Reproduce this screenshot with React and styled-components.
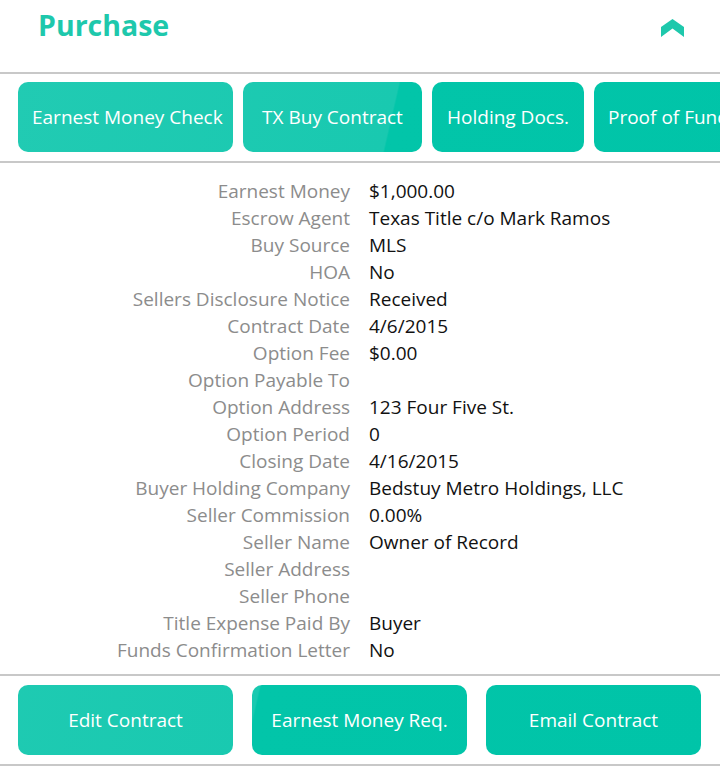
import React from "react"
import styled, { createGlobalStyle } from "styled-components"

const GlobalStyle = createGlobalStyle`
  html, body {
    margin: 0;
    padding: 0;
    background: #ffffff;
  }
  body {
    font-family: "Open Sans", "DejaVu Sans", sans-serif;
  }
`

const Page = styled.div`
  width: 720px;
  overflow: hidden;
`

const Header = styled.div`
  display: flex;
  align-items: flex-start;
  justify-content: space-between;
  height: 74px;
  padding: 4px 36px 0 38px;
  box-sizing: border-box;
  border-bottom: 2px solid #c8c8c8;
`

const Title = styled.h1`
  margin: 0;
  font-size: 28.5px;
  line-height: 42px;
  font-weight: 700;
  color: #1ec8ac;
`

const Chevron = styled.svg`
  margin-top: 15px;
  display: block;
`

const ButtonStrip = styled.div`
  display: flex;
  gap: ${(p) => p.$gap}px;
  padding: ${(p) => p.$top}px 18px 9px;
  overflow: hidden;
  border-bottom: 2px solid #c8c8c8;
`

/* the gloss is one diagonal across the screen, so the gradient is fixed to the viewport */
const ActionButton = styled.button`
  flex: none;
  width: ${(p) => p.$w}px;
  height: 70px;
  border: none;
  border-radius: 10px;
  background: linear-gradient(103deg, #22cbb3 0%, #19c9b0 46.5%, #02c5a9 46.7%, #00c4a8 100%) fixed;
  color: #ffffff;
  font-family: inherit;
  font-size: 19px;
  white-space: nowrap;
  padding: 0 14px;
  text-align: ${(p) => (p.$left ? "left" : "center")};
  cursor: pointer;
`

const Details = styled.dl`
  display: grid;
  grid-template-columns: 350px 1fr;
  column-gap: 19px;
  margin: 0;
  padding: 15px 0 10px;
  border-bottom: 2px solid #c8c8c8;
  font-size: 19px;
  line-height: 27px;
`

const Label = styled.dt`
  text-align: right;
  color: #8c8c8c;
  white-space: nowrap;
`

const Value = styled.dd`
  margin: 0;
  color: #111111;
  white-space: nowrap;
  min-height: 27px;
`

const rows = [
  ["Earnest Money", "$1,000.00"],
  ["Escrow Agent", "Texas Title c/o Mark Ramos"],
  ["Buy Source", "MLS"],
  ["HOA", "No"],
  ["Sellers Disclosure Notice", "Received"],
  ["Contract Date", "4/6/2015"],
  ["Option Fee", "$0.00"],
  ["Option Payable To", ""],
  ["Option Address", "123 Four Five St."],
  ["Option Period", "0"],
  ["Closing Date", "4/16/2015"],
  ["Buyer Holding Company", "Bedstuy Metro Holdings, LLC"],
  ["Seller Commission", "0.00%"],
  ["Seller Name", "Owner of Record"],
  ["Seller Address", ""],
  ["Seller Phone", ""],
  ["Title Expense Paid By", "Buyer"],
  ["Funds Confirmation Letter", "No"],
]

const docs = [
  ["Earnest Money Check", 215],
  ["TX Buy Contract", 179],
  ["Holding Docs.", 152],
  ["Proof of Funds", 180],
]

const actions = ["Edit Contract", "Earnest Money Req.", "Email Contract"]

export default function App() {
  return (
    <Page>
      <GlobalStyle />
      <Header>
        <Title>Purchase</Title>
        <Chevron width="23" height="18" viewBox="0 0 23 18">
          <polygon points="11.5,0 23,8 23,18 11.5,9.5 0,18 0,8" fill="#1ec8ac" />
        </Chevron>
      </Header>
      <ButtonStrip $gap={10} $top={8}>
        {docs.map(([name, w], i) => (
          <ActionButton key={name} $w={w} $left={i === docs.length - 1}>
            {name}
          </ActionButton>
        ))}
      </ButtonStrip>
      <Details>
        {rows.map(([label, value]) => (
          <React.Fragment key={label}>
            <Label>{label}</Label>
            <Value>{value}</Value>
          </React.Fragment>
        ))}
      </Details>
      <ButtonStrip $gap={19} $top={9}>
        {actions.map((name) => (
          <ActionButton key={name} $w={215}>
            {name}
          </ActionButton>
        ))}
      </ButtonStrip>
    </Page>
  )
}
